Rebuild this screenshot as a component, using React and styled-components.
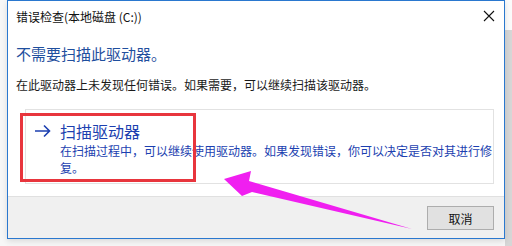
import React from 'react';
import styled, { createGlobalStyle } from 'styled-components';

const font = `"Noto Sans CJK SC", "Noto Sans", "Liberation Sans", sans-serif`;

const Global = createGlobalStyle`
  html, body {
    margin: 0;
    padding: 0;
    background: #f6f6f6;
    font-family: ${font};
    -webkit-font-smoothing: antialiased;
  }
`;

const Page = styled.div`
  display: flex;
  width: 512px;
  height: 246px;
  overflow: hidden;
`;
const LeftGap = styled.div`
  width: 7px;
  flex: none;
  background: #f7f7f7;
`;
const RightGap = styled.div`
  flex: 1;
  background: linear-gradient(#fbfbfb 0 30px, #d6d6d6 30px);
`;

const Window = styled.div`
  position: relative;
  width: 496px;
  height: 237px;
  flex: none;
  border: 1px solid #2a78cf;
  background: #fff;
  display: flex;
  flex-direction: column;
  box-shadow: 0 2px 6px rgba(0, 0, 0, 0.12);
`;

const TitleBar = styled.div`
  height: 31px;
  display: flex;
  align-items: center;
  justify-content: space-between;
  padding: 0 9px 0 8px;
  font-size: 12px;
  color: #111;
`;
const Close = styled.svg`
  width: 12px;
  height: 12px;
  margin-bottom: 1px;
`;

const Content = styled.div`
  flex: 1;
  padding: 12px 10px 0 8px;
`;
const Heading = styled.div`
  font-size: 15px;
  line-height: 20px;
  color: #1f4f9e;
`;
const Description = styled.div`
  margin-top: 12px;
  font-size: 12px;
  line-height: 18px;
  color: #1a1a1a;
`;

const CommandLink = styled.div`
  margin: 15px 0 10px 9px;
  border: 1px solid #e2e2e2;
  display: flex;
  align-items: flex-start;
  padding: 10px 0 7px 8px;
  color: #1c3fb0;
`;
const LinkArrow = styled.svg`
  width: 17px;
  height: 22px;
  flex: none;
  margin-right: 9px;
`;
const LinkText = styled.div`
  width: 438px;
`;
const LinkTitle = styled.div`
  font-size: 16px;
  line-height: 22px;
`;
const LinkNote = styled.div`
  font-size: 12px;
  line-height: 17px;
`;

const Footer = styled.div`
  height: 42px;
  background: #f0f0f0;
  border-top: 1px solid #e0e0e0;
  display: flex;
  justify-content: flex-end;
  align-items: flex-start;
  padding: 9px 10px 0 0;
  box-sizing: border-box;
`;
const Button = styled.button`
  width: 67px;
  height: 24px;
  background: #e1e1e1;
  border: 1px solid #adadad;
  font-family: ${font};
  font-size: 12px;
  color: #111;
  padding: 0;
`;

const Highlight = styled.div`
  position: absolute;
  left: 12px;
  top: 112px;
  width: 170px;
  height: 63px;
  border: 3px solid #e8353d;
  pointer-events: none;
`;
const Pointer = styled.svg`
  position: absolute;
  left: -8px;
  top: -1px;
  width: 512px;
  height: 246px;
  overflow: visible;
  pointer-events: none;
`;

const App = () => (
  <Page>
    <Global />
    <LeftGap />
    <Window>
      <TitleBar>
        <span>错误检查(本地磁盘 (C:))</span>
        <Close viewBox="0 0 12 12">
          <path d="M1 1 L11 11 M11 1 L1 11" stroke="#111" strokeWidth="1.1" fill="none" />
        </Close>
      </TitleBar>
      <Content>
        <Heading>不需要扫描此驱动器。</Heading>
        <Description>在此驱动器上未发现任何错误。如果需要，可以继续扫描该驱动器。</Description>
        <CommandLink>
          <LinkArrow viewBox="0 0 17 22">
            <path d="M1 11 H15.5 M10 5.5 L15.5 11 L10 16.5" stroke="#1c3fb0" strokeWidth="1.6" fill="none" />
          </LinkArrow>
          <LinkText>
            <LinkTitle>扫描驱动器</LinkTitle>
            <LinkNote>在扫描过程中，可以继续使用驱动器。如果发现错误，你可以决定是否对其进行修复。</LinkNote>
          </LinkText>
        </CommandLink>
      </Content>
      <Footer>
        <Button>取消</Button>
      </Footer>
      <Highlight />
      <Pointer viewBox="0 0 512 246">
        <polygon
          points="224,179 251,171 249,181 412,229 252,192 242,196"
          fill="#f01ff0"
        />
      </Pointer>
    </Window>
    <RightGap />
  </Page>
);

export default App;
